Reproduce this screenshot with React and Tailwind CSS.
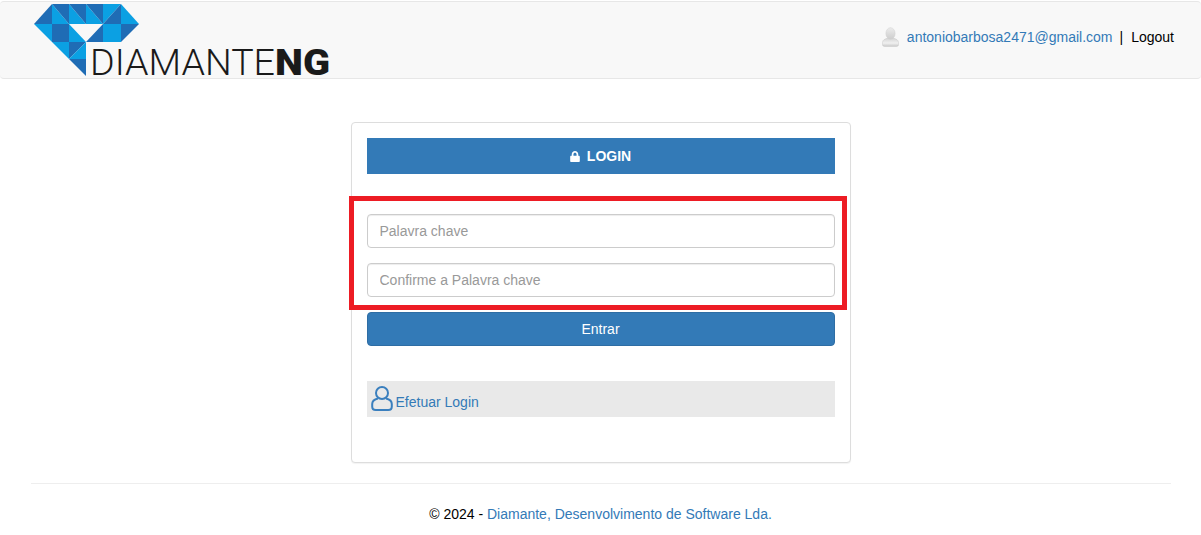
import React from 'react'
import { FaLock } from 'react-icons/fa'

const DARK = '#1f6cb5'
const LIGHT = '#0ba0e3'

const tris = [
  ['34,24 52,4 52,24', DARK],
  ['52,4 52,24 69,24', LIGHT],
  ['52,4 69,4 69,24', DARK],
  ['69,4 69,24 86,24', LIGHT],
  ['69,4 86,4 86,24', DARK],
  ['86,4 86,24 103,24', LIGHT],
  ['86,4 103,4 103,24', DARK],
  ['103,4 121,4 103,24', LIGHT],
  ['121,4 121,24 103,24', DARK],
  ['121,4 139,24 121,24', LIGHT],
  ['34,24 52,24 52,42', LIGHT],
  ['52,24 69,24 69,42 52,42', DARK],
  ['69,24 69,42 86,42', LIGHT],
  ['86,42 103,24 103,42', DARK],
  ['103,24 121,24 121,42 103,42', LIGHT],
  ['121,24 139,24 121,42', DARK],
  ['52,42 69,42 69,59', LIGHT],
  ['69,42 86,42 69,59', DARK],
  ['86,42 86,59 69,59', LIGHT],
  ['69,59 86,59 86,76', DARK]
]

// logo: diamond plus wordmark, drawn in page coordinates shifted by 30px
const Logo = () => (
  <svg width="310" height="78" viewBox="30 0 310 78" className="block overflow-visible">
    {tris.map(([points, fill]) => (
      <polygon key={points} points={points} fill={fill} />
    ))}
    <text
      x="90"
      y="75"
      fontFamily="Roboto, sans-serif"
      fontWeight="300"
      fontSize="36"
      fill="#1a1a1a"
      textLength="185"
      lengthAdjust="spacingAndGlyphs"
    >
      DIAMANTE
    </text>
    <text
      x="275"
      y="75"
      fontFamily="Roboto, sans-serif"
      fontWeight="900"
      fontSize="36"
      fill="#1a1a1a"
      textLength="55"
      lengthAdjust="spacingAndGlyphs"
    >
      NG
    </text>
  </svg>
)

const GrayUser = () => (
  <svg width="17" height="20" viewBox="0 0 17 20" className="block">
    <defs>
      <linearGradient id="grayHead" x1="0" y1="0" x2="0" y2="1">
        <stop offset="0" stopColor="#ececec" />
        <stop offset="1" stopColor="#cdcdcd" />
      </linearGradient>
      <linearGradient id="grayBody" x1="0" y1="0" x2="0" y2="1">
        <stop offset="0" stopColor="#d4d4d4" />
        <stop offset="0.6" stopColor="#f0f0f0" />
        <stop offset="1" stopColor="#c8c8c8" />
      </linearGradient>
    </defs>
    <path
      d="M6 11c-3 .8-5.500 2-5.500 4.500v2.300c0 1 1 1.700 2 1.700h12c1 0 2-.7 2-1.700v-2.300c0-2.500-2.500-3.700-5.500-4.500z"
      fill="url(#grayBody)"
      stroke="#cacaca"
      strokeWidth="0.5"
    />
    <ellipse cx="8.500" cy="6.500" rx="4.600" ry="5.800" fill="url(#grayHead)" stroke="#cecece" strokeWidth="0.5" />
  </svg>
)

const BlueUser = () => (
  <svg width="22" height="26" viewBox="0 0 22 26" fill="none" className="block">
    <ellipse cx="11" cy="7" rx="6" ry="5.900" stroke="#3a7fbe" strokeWidth="2" />
    <path
      d="M7 12.500C3.500 13.300 1.200 15 1.200 18v2.500c0 2 1.500 3.500 3.500 3.500h12.600c2 0 3.500-1.500 3.500-3.500V18c0-3-2.300-4.700-5.800-5.500"
      stroke="#3a7fbe"
      strokeWidth="2"
    />
  </svg>
)

const Field = ({ placeholder, className }) => (
  <input
    type="password"
    placeholder={placeholder}
    className={`block w-full h-[34px] px-3 bg-white border border-[#ccc] rounded-[4px] text-sm text-[#555] placeholder:text-[#999] shadow-[inset_0_1px_1px_rgba(0,0,0,0.075)] ${className || ''}`}
  />
)

const App = () => {
  return (
    <div className="min-h-[535px] pt-px bg-white text-sm text-[#333] font-['Liberation_Sans',Arial,sans-serif]">
      {/* Navbar */}
      <header className="flex items-start justify-between h-[78px] bg-[#f8f8f8] border-y border-[#e7e7e7] rounded-[4px] pl-[30px] pr-[27px]">
        <div className="-mt-[2px]">
          <Logo />
        </div>
        <div className="flex items-center mt-[25px]">
          <GrayUser />
          <a href="#" className="ml-[8px] text-[#337ab7]">antoniobarbosa2471@gmail.com</a>
          <span className="ml-[7px] mr-[8px] text-black">|</span>
          <a href="#" className="text-black">Logout</a>
        </div>
      </header>

      {/* Login card */}
      <div className="w-[500px] h-[341px] mx-auto mt-[43px] px-[15px] pt-[15px] bg-white border border-[#ddd] rounded-[4px] shadow-[0_1px_1px_rgba(0,0,0,0.05)]">
        <div className="flex items-center justify-center gap-[7px] h-9 bg-[#337ab7] text-white font-bold">
          <FaLock className="w-[10px] h-[11px]" />
          LOGIN
        </div>

        {/* Red highlight */}
        <div className="-ml-[18px] -mr-[12px] mt-[22px] border-[5px] border-[#ed1c24] pl-[13px] pr-[7px] pt-[13px] pb-[8px]">
          <Field placeholder="Palavra chave" />
          <Field placeholder="Confirme a Palavra chave" className="mt-[15px]" />
        </div>

        <button className="block w-full h-[34px] mt-[2px] bg-[#337ab7] border border-[#2e6da4] rounded-[4px] text-white">
          Entrar
        </button>

        <div className="flex items-center h-9 mt-[35px] pl-1 bg-[#e9e9e9]">
          <BlueUser />
          <a href="#" className="ml-[3px] mt-[5px] text-[#337ab7]">Efetuar Login</a>
        </div>
      </div>

      {/* Footer */}
      <div className="ml-[31px] mr-[30px] mt-5 border-t border-[#eee] pt-[20px] pr-px text-center text-black">
        © 2024 - <a href="#" className="text-[#337ab7]">Diamante, Desenvolvimento de Software Lda.</a>
      </div>
    </div>
  )
}

export default App
